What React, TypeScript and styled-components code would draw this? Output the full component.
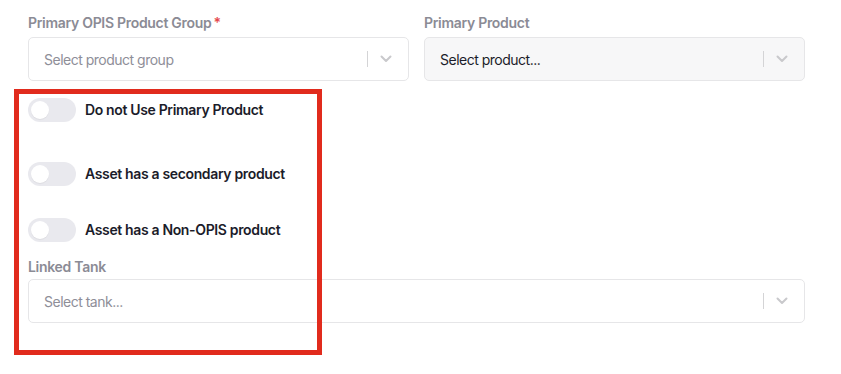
import React from "react";
import styled, { createGlobalStyle } from "styled-components";

const Global = createGlobalStyle`
  html, body { margin: 0; padding: 0; background: #ffffff; }
  body { font-family: Inter, "Noto Sans", sans-serif; -webkit-font-smoothing: antialiased; }
  * { box-sizing: border-box; }
`;

const Page = styled.div`
  position: relative;
  width: 841px;
  height: 374px;
  padding: 14px 36px 0 28px;
`;

const Row = styled.div`
  display: grid;
  grid-template-columns: 1fr 1fr;
  column-gap: 15px;
`;

const Field = styled.div`
  display: flex;
  flex-direction: column;
`;

const Label = styled.label<{ $gap?: number }>`
  font-size: 14px;
  font-weight: 600;
  color: #8b8b95;
  line-height: 17px;
  letter-spacing: -0.3px;
  margin-bottom: ${(p) => p.$gap ?? 6}px;
  display: flex;
  align-items: center;
`;

const Star = styled.span`
  color: #e5484d;
  margin-left: 2px;
`;

const SelectBox = styled.div<{ $disabled?: boolean }>`
  height: 44px;
  border: 1px solid #e6e6e8;
  border-radius: 5px;
  background: ${(p) => (p.$disabled ? "#f7f7f8" : "#ffffff")};
  display: flex;
  align-items: center;
  padding-left: 15px;
  padding-right: 16px;
`;

const Value = styled.span<{ $placeholder?: boolean }>`
  flex: 1;
  font-size: 14px;
  letter-spacing: -0.5px;
  color: ${(p) => (p.$placeholder ? "#8e8e98" : "#1b1c2a")};
`;

const Sep = styled.span`
  width: 1px;
  height: 16px;
  background: #d4d4d6;
  margin-right: 12px;
`;

const Chevron = () => (
  <svg width="12" height="8" viewBox="0 0 12 8" fill="none">
    <path d="M1.5 1.5 L6 6 L10.5 1.5" stroke="#c9c9cc" strokeWidth="2" strokeLinecap="round" strokeLinejoin="round" />
  </svg>
);

const Toggles = styled.div`
  display: flex;
  flex-direction: column;
  padding-top: 17px;
`;

const ToggleRow = styled.div<{ $gap: number }>`
  display: flex;
  align-items: center;
  gap: 9px;
  margin-bottom: ${(p) => p.$gap}px;
`;

const Track = styled.span`
  position: relative;
  width: 48px;
  height: 24px;
  border-radius: 12px;
  background: #e9e9ee;
  flex: none;
`;

const Knob = styled.span`
  position: absolute;
  left: 3px;
  top: 3px;
  width: 18px;
  height: 18px;
  border-radius: 50%;
  background: #ffffff;
  box-shadow: 0 1px 1px rgba(0,0,0,0.05);
`;

const ToggleText = styled.span`
  font-size: 14px;
  font-weight: 600;
  letter-spacing: -0.35px;
  color: #1b1c2a;
  margin-top: -2px;
`;

const Highlight = styled.div`
  position: absolute;
  left: 14px;
  top: 89px;
  width: 308px;
  height: 266px;
  border: 5px solid #e12b1d;
  pointer-events: none;
`;

const Toggle = ({ label, gap }: { label: string; gap: number }) => (
  <ToggleRow $gap={gap}>
    <Track><Knob /></Track>
    <ToggleText>{label}</ToggleText>
  </ToggleRow>
);

export default function App() {
  return (
    <>
      <Global />
      <Page>
        <Row>
          <Field>
            <Label>Primary OPIS Product Group<Star>*</Star></Label>
            <SelectBox>
              <Value $placeholder>Select product group</Value>
              <Sep />
              <Chevron />
            </SelectBox>
          </Field>
          <Field>
            <Label>Primary Product</Label>
            <SelectBox $disabled>
              <Value>Select product...</Value>
              <Sep />
              <Chevron />
            </SelectBox>
          </Field>
        </Row>
        <Toggles>
          <Toggle label="Do not Use Primary Product" gap={40} />
          <Toggle label="Asset has a secondary product" gap={32} />
          <Toggle label="Asset has a Non-OPIS product" gap={16} />
        </Toggles>
        <Field>
          <Label $gap={4}>Linked Tank</Label>
          <SelectBox>
            <Value $placeholder>Select tank...</Value>
            <Sep />
            <Chevron />
          </SelectBox>
        </Field>
        <Highlight />
      </Page>
    </>
  );
}
